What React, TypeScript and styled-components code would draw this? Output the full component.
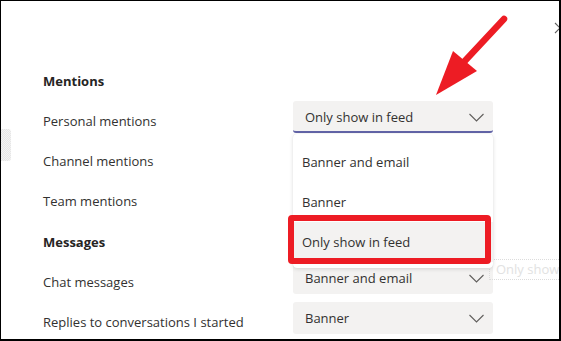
import React from "react";
import styled, { createGlobalStyle } from "styled-components";

const Global = createGlobalStyle`
  html, body { margin: 0; padding: 0; background: #ffffff; }
  body { font-family: "Segoe UI", "Open Sans", "Noto Sans", sans-serif; }
  * { box-sizing: border-box; }
`;

const Frame = styled.div`
  position: relative;
  width: 561px;
  height: 341px;
  overflow: hidden;
  background: #ffffff;
  border-style: solid;
  border-color: #000000;
  border-width: 1px 2px 2px 1px;
  font-family: "Segoe UI", "Open Sans", sans-serif;
  font-size: 13px;
  color: #323130;
`;

const ScrollHint = styled.div`
  position: absolute;
  left: 0;
  top: 128px;
  width: 10px;
  height: 32px;
  border-radius: 0 3px 3px 0;
  background-color: #eeeeee;
  background-image: repeating-conic-gradient(#e6e6e6 0 25%, #f3f3f3 0 50%);
  background-size: 2px 2px;
`;

const Close = styled.svg`
  position: absolute;
  left: 553px;
  top: 21px;
`;

const Content = styled.div`
  padding: 70px 0 0 42px;
  display: flex;
  flex-direction: column;
`;

const Heading = styled.div<{ $top?: number }>`
  font-weight: 700;
  font-size: 13px;
  line-height: 20px;
  height: 20px;
  margin-top: ${(p) => p.$top ?? 0}px;
  margin-bottom: 10px;
  color: #252423;
`;

const Rows = styled.div`
  display: grid;
  grid-template-columns: 250px 200px;
  grid-auto-rows: 32px;
  row-gap: 8px;
`;

const Label = styled.div`
  line-height: 20px;
  padding-top: 10px;
  white-space: nowrap;
`;

const Dropdown = styled.div<{ $active?: boolean }>`
  height: 32px;
  display: flex;
  align-items: center;
  justify-content: space-between;
  padding: 0 9px 0 12px;
  background: #f3f2f1;
  border-radius: 3px;
  border-bottom: ${(p) => (p.$active ? "2px solid #6264a7" : "none")};
  padding-top: ${(p) => (p.$active ? "2px" : "0")};
  line-height: 20px;
  white-space: nowrap;
`;

const Menu = styled.div`
  position: absolute;
  left: 292px;
  top: 133px;
  width: 200px;
  height: 134px;
  padding-top: 8px;
  background: #ffffff;
  border-radius: 4px;
  box-shadow: 0 1px 4px rgba(0, 0, 0, 0.13), 0 0 1px rgba(0, 0, 0, 0.1);
  display: flex;
  flex-direction: column;
`;

const MenuItem = styled.div<{ $selected?: boolean }>`
  height: 40px;
  display: flex;
  align-items: center;
  padding-left: 9px;
  line-height: 20px;
  background: ${(p) => (p.$selected ? "#f3f2f1" : "transparent")};
`;

const RedBox = styled.div`
  position: absolute;
  left: 287px;
  top: 214px;
  width: 203px;
  height: 49px;
  border: 6px solid #ed1c24;
  border-radius: 4px;
`;

const Ghost = styled.div`
  position: absolute;
  left: 488px;
  top: 258px;
  height: 21px;
  padding: 0 0 0 6px;
  border: 1px dotted #dcdcdc;
  color: #e2e2e2;
  line-height: 19px;
  white-space: nowrap;
`;

const Arrow = styled.svg`
  position: absolute;
  left: 429px;
  top: 9px;
`;

const Chevron = () => (
  <svg width="15" height="9" viewBox="0 0 15 9">
    <path d="M0.5 1 L7.5 8 L14.5 1" fill="none" stroke="#605e5c" strokeWidth="1.1" />
  </svg>
);

type Row = { label: string; value: string; active?: boolean };

/* Channel and Team dropdowns lie under the open menu, so their values are not drawn. */
const mentions: Row[] = [
  { label: "Personal mentions", value: "Only show in feed", active: true },
  { label: "Channel mentions", value: "" },
  { label: "Team mentions", value: "" },
];

const messages: Row[] = [
  { label: "Chat messages", value: "Banner and email" },
  { label: "Replies to conversations I started", value: "Banner" },
];

const renderRows = (rows: Row[]) =>
  rows.map((r) => (
    <React.Fragment key={r.label}>
      <Label>{r.label}</Label>
      <Dropdown $active={r.active}>
        <span>{r.value}</span>
        <Chevron />
      </Dropdown>
    </React.Fragment>
  ));

export default function App() {
  return (
    <>
      <Global />
      <Frame>
        <ScrollHint />
        <Close width="12" height="12" viewBox="0 0 12 12">
          <path d="M1 1 L11 11 M11 1 L1 11" stroke="#616161" strokeWidth="1.1" fill="none" />
        </Close>
        <Content>
          <Heading>Mentions</Heading>
          <Rows>{renderRows(mentions)}</Rows>
          <Heading $top={19}>Messages</Heading>
          <Rows>{renderRows(messages)}</Rows>
        </Content>
        <Ghost>Only show in feed</Ghost>
        <Menu>
          <MenuItem>Banner and email</MenuItem>
          <MenuItem>Banner</MenuItem>
          <MenuItem $selected>Only show in feed</MenuItem>
        </Menu>
        <RedBox />
        <Arrow width="85" height="92" viewBox="430 10 85 92">
          <line x1="504" y1="19" x2="462" y2="64" stroke="#ed1c24" strokeWidth="6.5" strokeLinecap="round" />
          <polygon points="436,95 453,51 477,71" fill="#ed1c24" />
        </Arrow>
      </Frame>
    </>
  );
}
